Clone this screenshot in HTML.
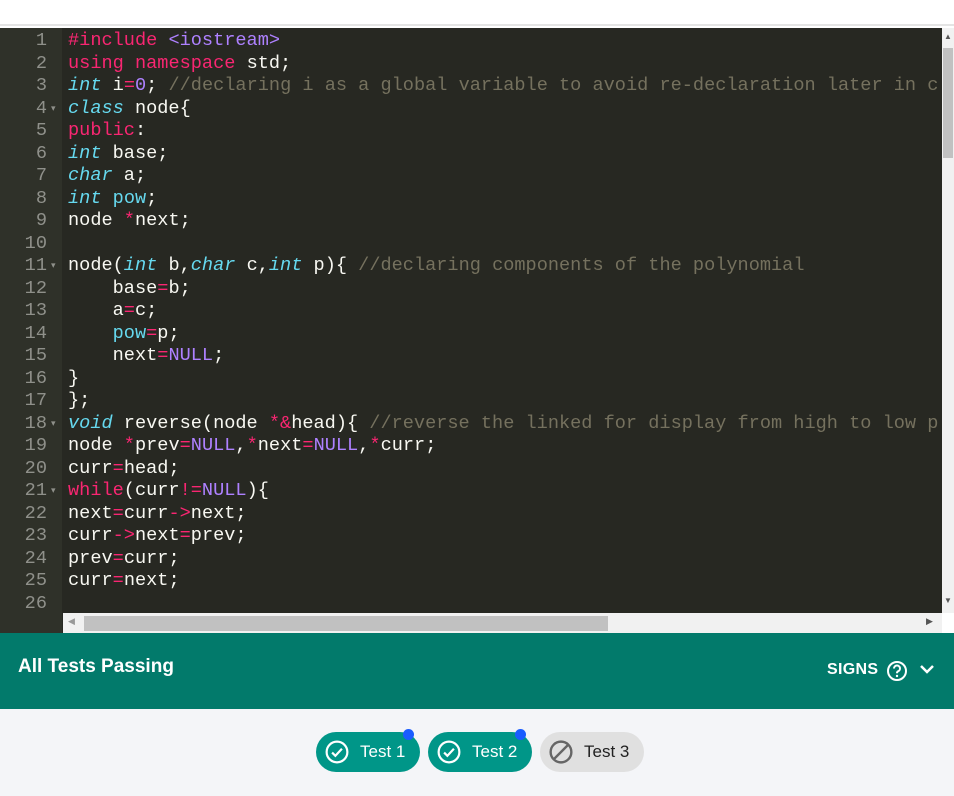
<!DOCTYPE html>
<html><head><style>
*{margin:0;padding:0;box-sizing:border-box}
body{width:954px;height:796px;background:#fff;position:relative;overflow:hidden;font-family:"Liberation Sans",sans-serif}
#top{position:absolute;left:0;top:0;width:954px;height:26px;background:#fff;border-bottom:2px solid #e4e4e4}
#ed{position:absolute;left:0;top:28px;width:942px;height:605px;background:#272822;overflow:hidden}
#gut{position:absolute;left:0;top:0;width:62px;height:605px;background:#2f3129}
.ln{position:absolute;left:0;width:47px;text-align:right;color:#8f908a;font:18.6px/22.5px "Liberation Mono",monospace}
.fd{position:absolute;left:51px;color:#8f908a;font-size:9px}
#code{position:absolute;left:68px;top:2px;font:18.6px/22.5px "Liberation Mono",monospace;color:#f8f8f2;white-space:pre}
#lns{position:absolute;left:0;top:2px}
.k{color:#f92672}.p{color:#ae81ff}.t{color:#66d9ef;font-style:italic}.c{color:#75715e}.v{color:#66d9ef}
#vs{position:absolute;left:942px;top:28px;width:12px;height:585px;background:#f1f1f1}
#vt{position:absolute;left:943px;top:48px;width:10px;height:110px;background:#c1c1c1}
#hs{position:absolute;left:63px;top:613px;width:879px;height:20px;background:#f1f1f1}
#ht{position:absolute;left:84px;top:616px;width:524px;height:15px;background:#c1c1c1}
#bar{position:absolute;left:0;top:633px;width:954px;height:76px;background:#027a6b;color:#fff}
#bot{position:absolute;left:0;top:709px;width:954px;height:87px;background:#f4f5f8}
.pill{position:absolute;top:732px;width:104px;height:40px;border-radius:20px;font-size:17px;line-height:40px;white-space:nowrap}
.pill span{position:absolute;left:44px;top:0;width:60px;white-space:nowrap}
.dot{position:absolute;width:11px;height:11px;border-radius:50%;background:#1a5cff;top:-3px;right:6px}
</style></head><body>
<div id="top"></div>
<div id="ed">
<div id="gut"></div>
<div id="lns"></div>
<div id="code"><span class="k">#include</span> <span class="p">&lt;iostream&gt;</span>
<span class="k">using</span> <span class="k">namespace</span> std;
<span class="t">int</span> i<span class="k">=</span><span class="p">0</span>; <span class="c">//declaring i as a global variable to avoid re-declaration later in c</span>
<span class="t">class</span> node{
<span class="k">public</span>:
<span class="t">int</span> base;
<span class="t">char</span> a;
<span class="t">int</span> <span class="v">pow</span>;
node <span class="k">*</span>next;

node(<span class="t">int</span> b,<span class="t">char</span> c,<span class="t">int</span> p){ <span class="c">//declaring components of the polynomial</span>
    base<span class="k">=</span>b;
    a<span class="k">=</span>c;
    <span class="v">pow</span><span class="k">=</span>p;
    next<span class="k">=</span><span class="p">NULL</span>;
}
};
<span class="t">void</span> reverse(node <span class="k">*&amp;</span>head){ <span class="c">//reverse the linked for display from high to low p</span>
node <span class="k">*</span>prev<span class="k">=</span><span class="p">NULL</span>,<span class="k">*</span>next<span class="k">=</span><span class="p">NULL</span>,<span class="k">*</span>curr;
curr<span class="k">=</span>head;
<span class="k">while</span>(curr<span class="k">!=</span><span class="p">NULL</span>){
next<span class="k">=</span>curr<span class="k">-&gt;</span>next;
curr<span class="k">-&gt;</span>next<span class="k">=</span>prev;
prev<span class="k">=</span>curr;
curr<span class="k">=</span>next;
</div>
<script>
var h='';var folds=[4,11,18,21];
for(var i=1;i<=26;i++){h+='<div class="ln" style="top:'+((i-1)*22.5)+'px">'+i+'</div>';
if(folds.indexOf(i)>=0)h+='<div class="fd" style="top:'+((i-1)*22.5+5)+'px">&#9662;</div>';}
document.getElementById('lns').innerHTML=h;
</script>
</div>
<div id="vs"></div><div id="vt"></div>
<div style="position:absolute;left:944px;top:32px;font-size:8px;color:#555">&#9650;</div>
<div style="position:absolute;left:944px;top:596px;font-size:8px;color:#555">&#9660;</div>
<div id="hs"></div><div id="ht"></div>
<div style="position:absolute;left:68px;top:616px;font-size:9px;color:#999">&#9664;</div>
<div style="position:absolute;left:926px;top:616px;font-size:9px;color:#555">&#9654;</div>
<div id="bar">
<div style="position:absolute;left:18px;top:23px;font-size:19px;font-weight:bold">All Tests Passing</div>
<div style="position:absolute;left:827px;top:28px;font-size:16px;font-weight:bold;letter-spacing:0.3px">SIGNS</div>
<svg style="position:absolute;left:886px;top:27px" width="22" height="22" viewBox="0 0 22 22"><circle cx="11" cy="11" r="9" fill="none" stroke="#fff" stroke-width="2"/><path d="M8 8.5a3 3 0 1 1 4 2.8c-.8.4-1 .9-1 1.9" fill="none" stroke="#fff" stroke-width="2"/><circle cx="11" cy="16" r="1.2" fill="#fff"/></svg>
<svg style="position:absolute;left:918px;top:30px" width="18" height="14" viewBox="0 0 18 14"><path d="M3 3l6 6 6-6" fill="none" stroke="#fff" stroke-width="2.5"/></svg>
</div>
<div id="bot"></div>
<div class="pill" style="left:316px;background:#009688;color:#fff">
<svg style="position:absolute;left:9px;top:8px" width="24" height="24" viewBox="0 0 22 22"><circle cx="11" cy="11" r="9.5" fill="none" stroke="#fff" stroke-width="2"/><path d="M6.5 11.5l3 3 6-6.5" fill="none" stroke="#fff" stroke-width="2"/></svg>
<span>Test 1</span><div class="dot"></div></div>
<div class="pill" style="left:428px;background:#009688;color:#fff">
<svg style="position:absolute;left:9px;top:8px" width="24" height="24" viewBox="0 0 22 22"><circle cx="11" cy="11" r="9.5" fill="none" stroke="#fff" stroke-width="2"/><path d="M6.5 11.5l3 3 6-6.5" fill="none" stroke="#fff" stroke-width="2"/></svg>
<span>Test 2</span><div class="dot"></div></div>
<div class="pill" style="left:540px;background:#e0e0e0;color:#222">
<svg style="position:absolute;left:9px;top:8px" width="24" height="24" viewBox="0 0 22 22"><circle cx="11" cy="11" r="9.5" fill="none" stroke="#666" stroke-width="2.2"/><path d="M17.5 4.5L4.5 17.5" stroke="#666" stroke-width="2.2"/></svg>
<span>Test 3</span></div>
</body></html>
